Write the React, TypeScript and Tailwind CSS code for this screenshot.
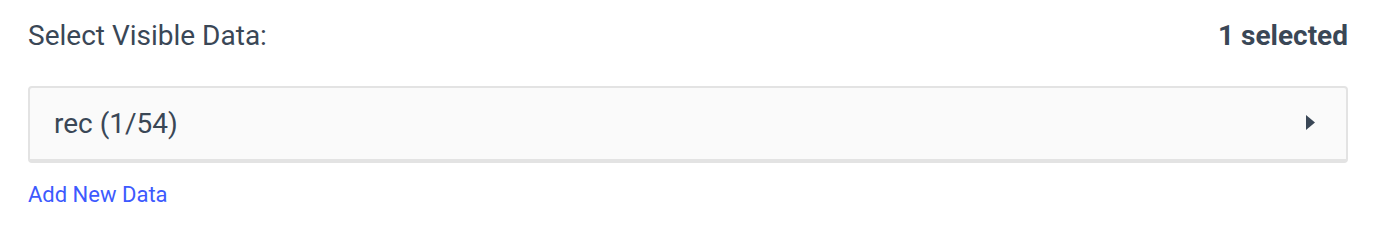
import React from "react";

export default function App() {
  return (
    <div
      className="w-[1388px] h-[224px] bg-white pl-[28px] pr-[40px] pt-[20px]"
      style={{ fontFamily: "Roboto, 'Liberation Sans', sans-serif" }}
    >
      <div className="flex items-center justify-between h-[32px] text-[28px] leading-[32px] text-[#3a4756]">
        <span>Select Visible Data:</span>
        <span className="font-bold">1 selected</span>
      </div>
      <div className="mt-[34px] h-[77px] flex items-center justify-between rounded-[4px] border-2 border-b-[4px] border-[#e3e3e3] bg-[#fafafa] pl-[24px] pr-[31px]">
        <span className="text-[28px] leading-[32px] text-[#3a4756] mt-[1px]">rec (1/54)</span>
        <svg width="9" height="15" viewBox="0 0 9 15" className="mt-[-2px]">
          <path d="M0 0 L9 7.5 L0 15 Z" fill="#3a4756" />
        </svg>
      </div>
      <div className="mt-[19px] text-[22px] leading-[26px] text-[#3d5afe]">Add New Data</div>
    </div>
  );
}
